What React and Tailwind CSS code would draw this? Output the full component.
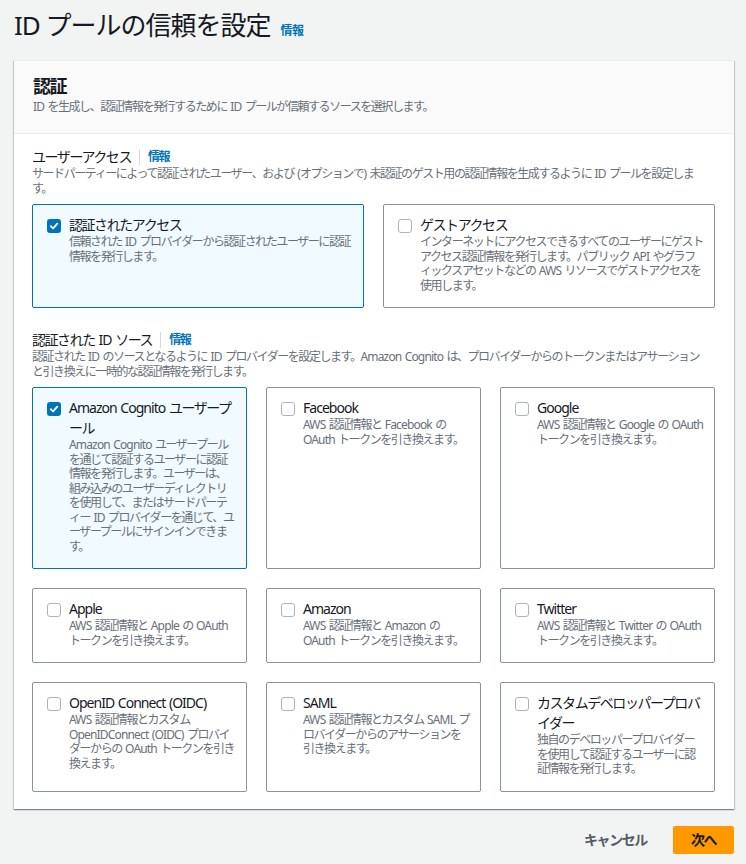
import React from "react";

const FONT = { fontFamily: '"Noto Sans", "Noto Sans CJK JP", sans-serif' };

function T({ children }) {
  const parts = String(children).split(/([\x20-\x7E]+)/);
  return parts.map((p, i) =>
    /^[\x20-\x7E]+$/.test(p) ? (
      <span key={i} className="tracking-[-0.07em] [word-spacing:1px]">
        {p}
      </span>
    ) : (
      <React.Fragment key={i}>{p}</React.Fragment>
    )
  );
}

function Checkbox({ checked }) {
  if (checked) {
    return (
      <span className="mt-[4px] flex h-[14px] w-[14px] shrink-0 items-center justify-center rounded-[3px] bg-[#0073bb]">
        <svg width="10" height="10" viewBox="0 0 10 10" fill="none">
          <path d="M1.8 5.2 L4.1 7.4 L8.3 2.6" stroke="white" strokeWidth="1.8" strokeLinecap="round" strokeLinejoin="round" />
        </svg>
      </span>
    );
  }
  return <span className="mt-[4px] h-[14px] w-[14px] shrink-0 rounded-[3px] border border-[#aab7b8] bg-white" />;
}

function Tile({ checked, title, desc }) {
  return (
    <div
      className={
        "flex gap-[8px] rounded-[2px] border pt-[10px] pb-[14px] pl-[14px] pr-[10px] " +
        (checked ? "border-[#0073bb] bg-[#f1faff]" : "border-[#879596] bg-white")
      }
    >
      <Checkbox checked={checked} />
      <div className="min-w-0">
        <div className="text-[14px] leading-[20px] text-[#16191f]">
          <T>{title}</T>
        </div>
        <div className="text-[12px] leading-[14.5px] text-[#687078]">
          <T>{desc}</T>
        </div>
      </div>
    </div>
  );
}

function SectionHead({ title, desc }) {
  return (
    <div>
      <div className="flex items-center text-[14px] leading-[20px] text-[#16191f]">
        <span>
          <T>{title}</T>
        </span>
        <span className="mx-[8px] h-[16px] w-px bg-[#d5dbdb]" />
        <span className="text-[12px] font-bold text-[#0073bb]">情報</span>
      </div>
      <div className="pr-[12px] text-[12px] leading-[14.5px] text-[#687078]">
        <T>{desc}</T>
      </div>
    </div>
  );
}

export default function App() {
  return (
    <div lang="ja" style={FONT} className="min-h-[864px] w-[746px] bg-[#f2f3f3] pl-[14px] pr-[12px] pt-[7px] tracking-[-0.09em]">
      <div className="flex items-baseline gap-[10px]">
        <h1 className="text-[26px] leading-[36px] tracking-[-1px] text-[#16191f]">ID プールの信頼を設定</h1>
        <span className="text-[12px] font-bold tracking-[-0.05em] text-[#0073bb]">情報</span>
      </div>

      <div className="mt-[17px] w-[720px] border-t border-[#eaeded] bg-white shadow-[0_1px_1px_0_rgba(0,28,36,0.3),1px_1px_1px_0_rgba(0,28,36,0.15),-1px_1px_1px_0_rgba(0,28,36,0.15)]">
        <div className="border-b border-[#eaeded] bg-[#fafafa] pl-[19px] pr-[19px] pt-[14px] pb-[18px]">
          <div className="text-[18px] font-bold leading-[22px] text-[#16191f]">認証</div>
          <div className="mt-[2px] text-[12px] leading-[16px] text-[#687078]">
            <T>ID を生成し、認証情報を発行するために ID プールが信頼するソースを選択します。</T>
          </div>
        </div>

        <div className="pl-[18px] pr-[19px] pt-[13px] pb-[17px]">
          <SectionHead
            title="ユーザーアクセス"
            desc="サードパーティーによって認証されたユーザー、および (オプションで) 未認証のゲスト用の認証情報を生成するように ID プールを設定します。"
          />
          <div className="mt-[8px] grid grid-cols-2 gap-[19px]">
            <Tile checked title="認証されたアクセス" desc="信頼された ID プロバイダーから認証されたユーザーに認証情報を発行します。" />
            <Tile
              title="ゲストアクセス"
              desc="インターネットにアクセスできるすべてのユーザーにゲストアクセス認証情報を発行します。パブリック API やグラフィックスアセットなどの AWS リソースでゲストアクセスを使用します。"
            />
          </div>

          <div className="mt-[22px]">
            <SectionHead
              title="認証された ID ソース"
              desc="認証された ID のソースとなるように ID プロバイダーを設定します。Amazon Cognito は、プロバイダーからのトークンまたはアサーションと引き換えに一時的な認証情報を発行します。"
            />
          </div>
          <div className="mt-[8px] grid grid-cols-3 gap-[19px]">
            <Tile
              checked
              title="Amazon Cognito ユーザープール"
              desc="Amazon Cognito ユーザープールを通じて認証するユーザーに認証情報を発行します。ユーザーは、組み込みのユーザーディレクトリを使用して、またはサードパーティー ID プロバイダーを通じて、ユーザープールにサインインできます。"
            />
            <Tile title="Facebook" desc="AWS 認証情報と Facebook の OAuth トークンを引き換えます。" />
            <Tile title="Google" desc="AWS 認証情報と Google の OAuth トークンを引き換えます。" />
            <Tile title="Apple" desc="AWS 認証情報と Apple の OAuth トークンを引き換えます。" />
            <Tile title="Amazon" desc="AWS 認証情報と Amazon の OAuth トークンを引き換えます。" />
            <Tile title="Twitter" desc="AWS 認証情報と Twitter の OAuth トークンを引き換えます。" />
            <Tile
              title="OpenID Connect (OIDC)"
              desc="AWS 認証情報とカスタム OpenIDConnect (OIDC) プロバイダーからの OAuth トークンを引き換えます。"
            />
            <Tile title="SAML" desc="AWS 認証情報とカスタム SAML プロバイダーからのアサーションを引き換えます。" />
            <Tile
              title="カスタムデベロッパープロバイダー"
              desc="独自のデベロッパープロバイダーを使用して認証するユーザーに認証情報を発行します。"
            />
          </div>
        </div>
      </div>

      <div className="mt-[17px] flex w-[720px] items-center justify-end">
        <button className="mr-[6px] px-[20px] text-[14px] font-bold leading-[28px] text-[#545b64]">キャンセル</button>
        <button className="h-[28px] rounded-[2px] bg-[#ff9900] px-[18px] text-[14px] font-bold leading-[28px] text-[#16191f]">次へ</button>
      </div>
    </div>
  );
}
